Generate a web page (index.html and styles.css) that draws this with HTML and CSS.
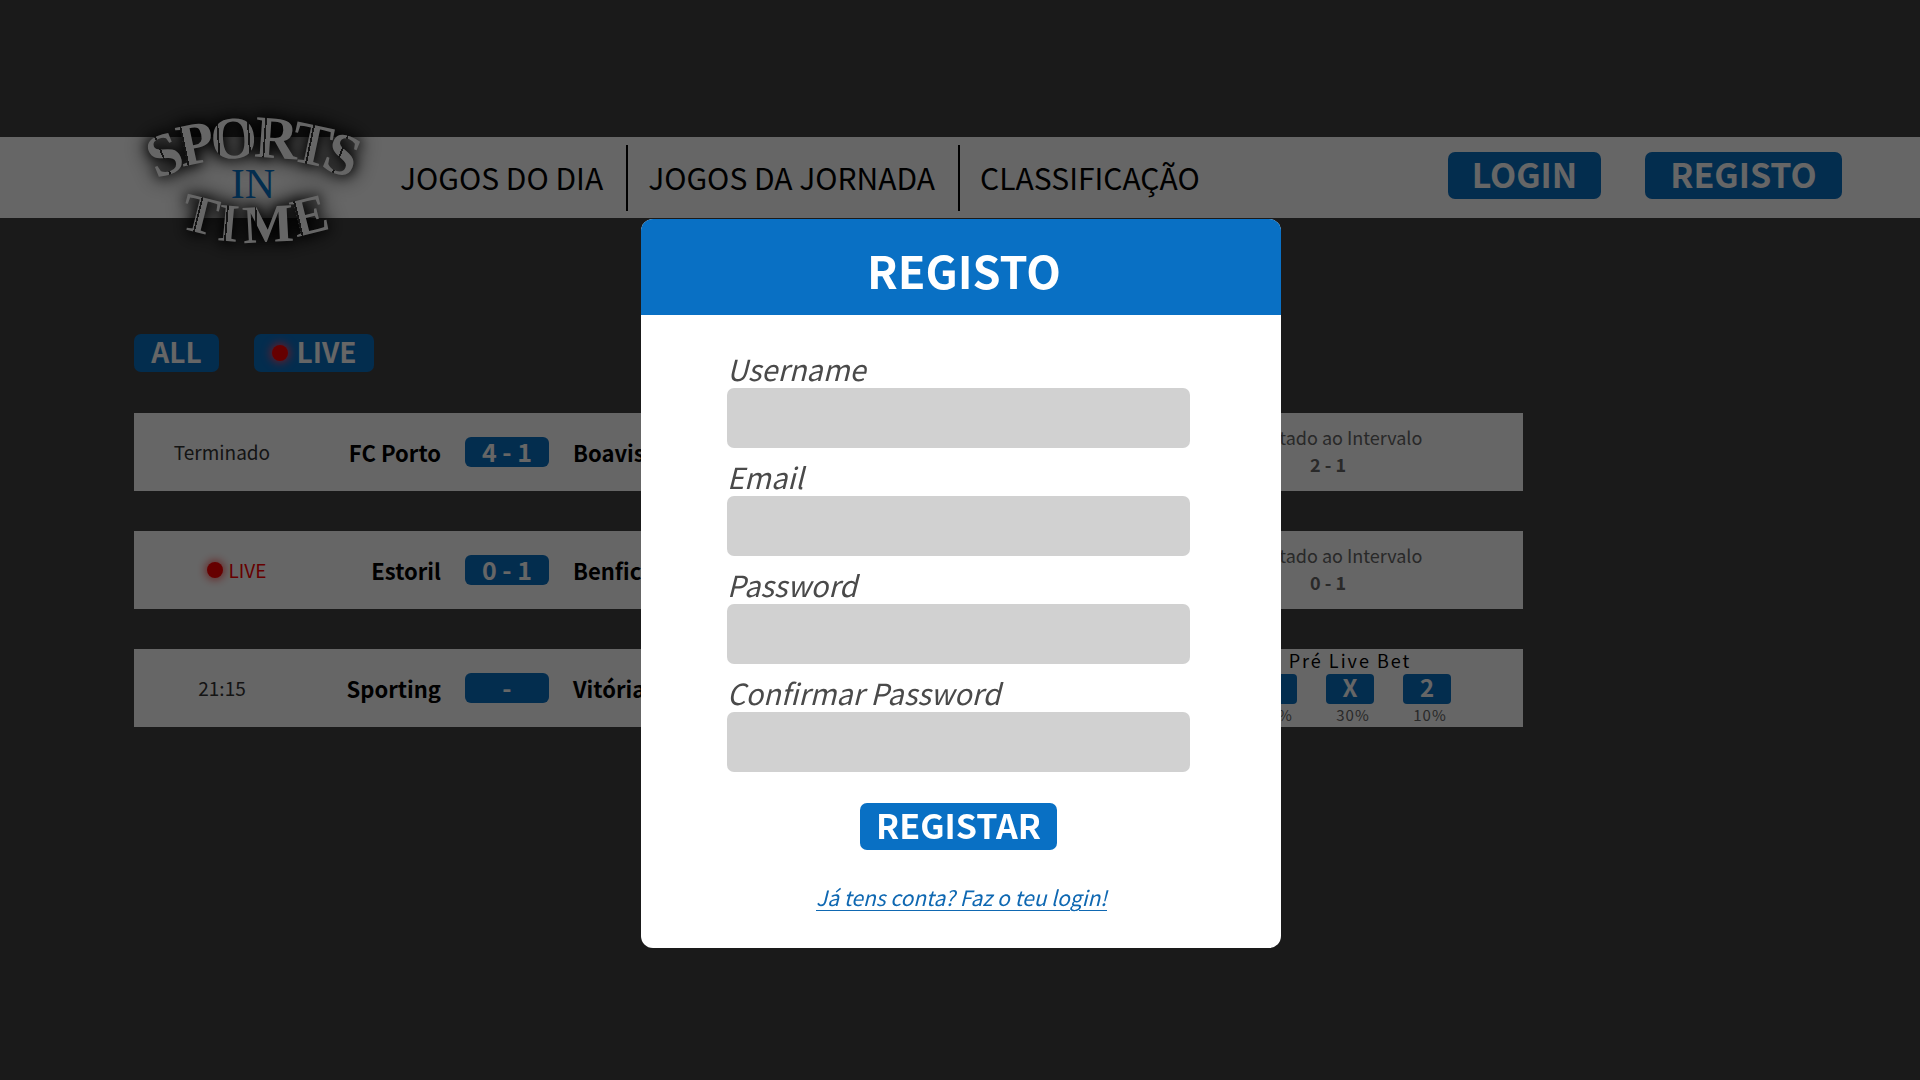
FILE: index.html
```html
<!DOCTYPE html>
<html lang="pt">
<head>
<meta charset="utf-8">
<title>Sports in Time</title>
<link rel="stylesheet" href="styles.css">
</head>
<body>
<header class="topbar">
  <a class="logo" href="#">
    <svg viewBox="120 82 260 190" width="260" height="190" role="img" aria-label="Sports in Time">
      <defs>
        <!-- Engraved line down the stem: centred, on the left stem, on both bowls -->
        <linearGradient id="stem-center" gradientUnits="userSpaceOnUse" x1="-30" x2="30" y1="0" y2="0">
          <stop offset=".45" stop-color="#fff"/>
          <stop offset=".45" stop-color="#333"/>
          <stop offset=".48" stop-color="#333"/>
          <stop offset=".48" stop-color="#fff"/>
        </linearGradient>
        <linearGradient id="stem-left" gradientUnits="userSpaceOnUse" x1="-30" x2="30" y1="0" y2="0">
          <stop offset=".29" stop-color="#fff"/>
          <stop offset=".29" stop-color="#333"/>
          <stop offset=".32" stop-color="#333"/>
          <stop offset=".32" stop-color="#fff"/>
        </linearGradient>
        <linearGradient id="stem-both" gradientUnits="userSpaceOnUse" x1="-30" x2="30" y1="0" y2="0">
          <stop offset=".23" stop-color="#fff"/>
          <stop offset=".23" stop-color="#333"/>
          <stop offset=".26" stop-color="#333"/>
          <stop offset=".26" stop-color="#fff"/>
          <stop offset=".74" stop-color="#fff"/>
          <stop offset=".74" stop-color="#333"/>
          <stop offset=".77" stop-color="#333"/>
          <stop offset=".77" stop-color="#fff"/>
        </linearGradient>
      </defs>
      <g class="logo-word logo-sports">
        <text fill="url(#stem-center)" transform="translate(172 172) rotate(-22)">S</text>
        <text fill="url(#stem-left)" transform="translate(200 162) rotate(-12)">P</text>
        <text fill="url(#stem-both)" transform="translate(235 157) rotate(-4)">O</text>
        <text fill="url(#stem-left)" transform="translate(275 157) rotate(4)">R</text>
        <text fill="url(#stem-center)" transform="translate(308 163) rotate(12)">T</text>
        <text fill="url(#stem-center)" transform="translate(335 172) rotate(22)">S</text>
      </g>
      <g class="logo-word logo-time">
        <text fill="url(#stem-center)" transform="translate(196 231) rotate(14)">T</text>
        <text fill="url(#stem-center)" transform="translate(227 240) rotate(5)">I</text>
        <text fill="url(#stem-left)" transform="translate(269 241) rotate(-3)">M</text>
        <text fill="url(#stem-left)" transform="translate(314 232) rotate(-14)">E</text>
      </g>
      <text class="logo-in" x="253" y="197">IN</text>
    </svg>
  </a>
  <nav class="nav">
    <a href="#">JOGOS DO DIA</a>
    <a href="#">JOGOS DA JORNADA</a>
    <a href="#">CLASSIFICAÇÃO</a>
  </nav>
  <div class="account">
    <button class="btn btn-login" type="button">LOGIN</button>
    <button class="btn btn-register" type="button">REGISTO</button>
  </div>
</header>

<main class="games">
  <div class="filters">
    <button class="filter" type="button">ALL</button>
    <button class="filter filter-live" type="button"><span class="dot"></span>LIVE</button>
  </div>
  <ul class="cards">
    <li class="card">
      <span class="status">Terminado</span>
      <span class="team home">FC Porto</span>
      <span class="score">4 - 1</span>
      <span class="team">Boavista</span>
      <div class="halftime">Resultado ao Intervalo<strong>2 - 1</strong></div>
    </li>
    <li class="card">
      <span class="status status-live"><span class="dot"></span>LIVE</span>
      <span class="team home">Estoril</span>
      <span class="score">0 - 1</span>
      <span class="team">Benfica</span>
      <div class="halftime">Resultado ao Intervalo<strong>0 - 1</strong></div>
    </li>
    <li class="card">
      <span class="status">21:15</span>
      <span class="team home">Sporting</span>
      <span class="score">-</span>
      <span class="team">Vitória</span>
      <div class="bet">
        <span class="bet-title">Pré Live Bet</span>
        <div class="bet-options">
          <div class="bet-option"><button class="chip" type="button">1</button><span class="odds">60%</span></div>
          <div class="bet-option"><button class="chip" type="button">X</button><span class="odds">30%</span></div>
          <div class="bet-option"><button class="chip" type="button">2</button><span class="odds">10%</span></div>
        </div>
      </div>
    </li>
  </ul>
</main>

<div class="overlay">
  <section class="modal" role="dialog" aria-modal="true" aria-labelledby="modal-title">
    <h1 class="modal-title" id="modal-title">REGISTO</h1>
    <form class="form">
      <div class="field">
        <label for="username">Username</label>
        <input id="username" type="text">
      </div>
      <div class="field">
        <label for="email">Email</label>
        <input id="email" type="email">
      </div>
      <div class="field">
        <label for="password">Password</label>
        <input id="password" type="password">
      </div>
      <div class="field">
        <label for="confirm">Confirmar Password</label>
        <input id="confirm" type="password">
      </div>
      <button class="btn btn-submit" type="submit">REGISTAR</button>
      <a class="login-link" href="#">Já tens conta? Faz o teu login!</a>
    </form>
  </section>
</div>
</body>
</html>
```

FILE: styles.css
```css
* {
  box-sizing: border-box;
}

body {
  margin: 0;
  padding-top: 137px;
  background: #434343;
  color: #000;
  font-family: "Noto Sans CJK JP", "Noto Sans", sans-serif;
}

button,
input {
  font-family: inherit;
  border: 0;
}

button {
  padding: 0 0 4px;
  border-radius: 7px;
  background: #0970c4;
  color: #fff;
  font-weight: 700;
}

/* Top bar */
.topbar {
  display: flex;
  align-items: center;
  min-height: 81px;
  padding: 0 78px 0 120px;
  background: #fff;
}

.logo {
  flex: none;
  margin: -60px 0;
}

.logo svg {
  display: block;
  overflow: visible;
}

.logo text {
  font-family: "Liberation Serif", serif;
  font-weight: 700;
  text-anchor: middle;
}

.logo-word {
  filter: drop-shadow(0 0 6px #000) drop-shadow(0 0 10px #000);
}

.logo-sports {
  font-size: 60px;
}

.logo-time {
  font-size: 54px;
}

.logo .logo-in {
  fill: #0970c4;
  font-size: 42px;
  font-weight: 400;
}

.nav {
  display: flex;
  flex: 1;
}

.nav a {
  padding: 0 23px 2px 20px;
  color: #000;
  font-size: 30px;
  line-height: 64px;
  text-decoration: none;
  white-space: nowrap;
}

.nav a + a {
  border-left: 2px solid #000;
}

.account {
  display: flex;
  gap: 44px;
  padding-bottom: 4px;
}

.btn {
  height: 47px;
  font-size: 34px;
  line-height: 42px;
}

.btn-login {
  width: 153px;
}

.btn-register,
.btn-submit {
  width: 197px;
}

/* Games */
.games {
  padding: 116px 397px 0 134px;
}

.filters {
  display: flex;
  gap: 35px;
}

.filter {
  display: flex;
  align-items: center;
  justify-content: center;
  width: 85px;
  height: 38px;
  font-size: 28px;
  line-height: 34px;
}

.filter-live {
  gap: 9px;
  width: 120px;
}

.dot {
  width: 16px;
  height: 16px;
  border-radius: 50%;
  background: #f00;
  box-shadow: 0 0 8px 2px #f0476a;
}

.filter .dot {
  margin-top: 4px;
}

.cards {
  display: grid;
  gap: 40px;
  margin: 41px 0 0;
  padding: 0;
  list-style: none;
}

.card {
  display: grid;
  grid-template-columns: 176px 107px 84px 1fr 390px;
  column-gap: 24px;
  align-items: center;
  min-height: 78px;
  background: #fff;
}

.status {
  display: flex;
  align-items: center;
  justify-content: center;
  gap: 5px;
  color: #333;
  font-size: 19px;
  line-height: 28px;
}

.status-live {
  padding-left: 30px;
  color: #f00;
}

.status-live .dot {
  box-shadow: 0 0 8px 2px #f66;
}

.team {
  font-size: 22px;
  font-weight: 700;
  line-height: 30px;
}

.home {
  text-align: right;
  white-space: nowrap;
}

.score {
  height: 30px;
  border-radius: 6px;
  background: #0970c4;
  color: #fff;
  font-size: 25px;
  font-weight: 700;
  line-height: 28px;
  text-align: center;
}

.halftime {
  display: grid;
  padding-bottom: 2px;
  color: #666;
  font-size: 18px;
  line-height: 27px;
  text-align: center;
}

.bet {
  display: grid;
  align-self: start;
  justify-items: center;
  gap: 3px;
  padding-left: 44px;
}

.bet-title {
  font-size: 18px;
  line-height: 22px;
  letter-spacing: 2px;
}

.bet-options {
  display: flex;
  gap: 29px;
}

.bet-option {
  display: grid;
  justify-items: center;
}

.odds {
  padding-left: 6px;
  color: #666;
  font-size: 15px;
  line-height: 22px;
  letter-spacing: 1px;
}

.chip {
  width: 48px;
  height: 30px;
  border-radius: 4px;
  font-size: 24px;
  line-height: 26px;
}

/* Registration dialog */
.overlay {
  position: fixed;
  inset: 0;
  display: flex;
  align-items: flex-start;
  justify-content: center;
  padding: 219px 0 0 2px;
  background: rgba(0, 0, 0, 0.6);
}

.modal {
  width: 640px;
  border-radius: 12px;
  overflow: hidden;
  background: #fff;
}

.modal-title {
  margin: 0;
  padding: 6px 0 0 6px;
  background: #0970c4;
  color: #fff;
  font-size: 45px;
  line-height: 90px;
  text-align: center;
}

.form {
  display: flex;
  flex-direction: column;
  align-items: center;
  gap: 8px;
  padding: 33px 91px 32px 86px;
}

.field {
  display: grid;
  width: 100%;
}

.field label {
  color: #4a4a4a;
  font-size: 29px;
  font-style: italic;
  line-height: 40px;
}

.field input {
  width: 100%;
  height: 60px;
  padding: 0 16px;
  border-radius: 7px;
  background: #d1d1d1;
  color: #4a4a4a;
  font-size: 24px;
}

.btn-submit {
  margin-top: 23px;
}

.login-link {
  margin-top: 20px;
  padding-left: 6px;
  color: #0f68b2;
  font-size: 21px;
  font-style: italic;
  line-height: 38px;
  text-underline-offset: 4px;
  text-decoration-thickness: 1px;
}
```
